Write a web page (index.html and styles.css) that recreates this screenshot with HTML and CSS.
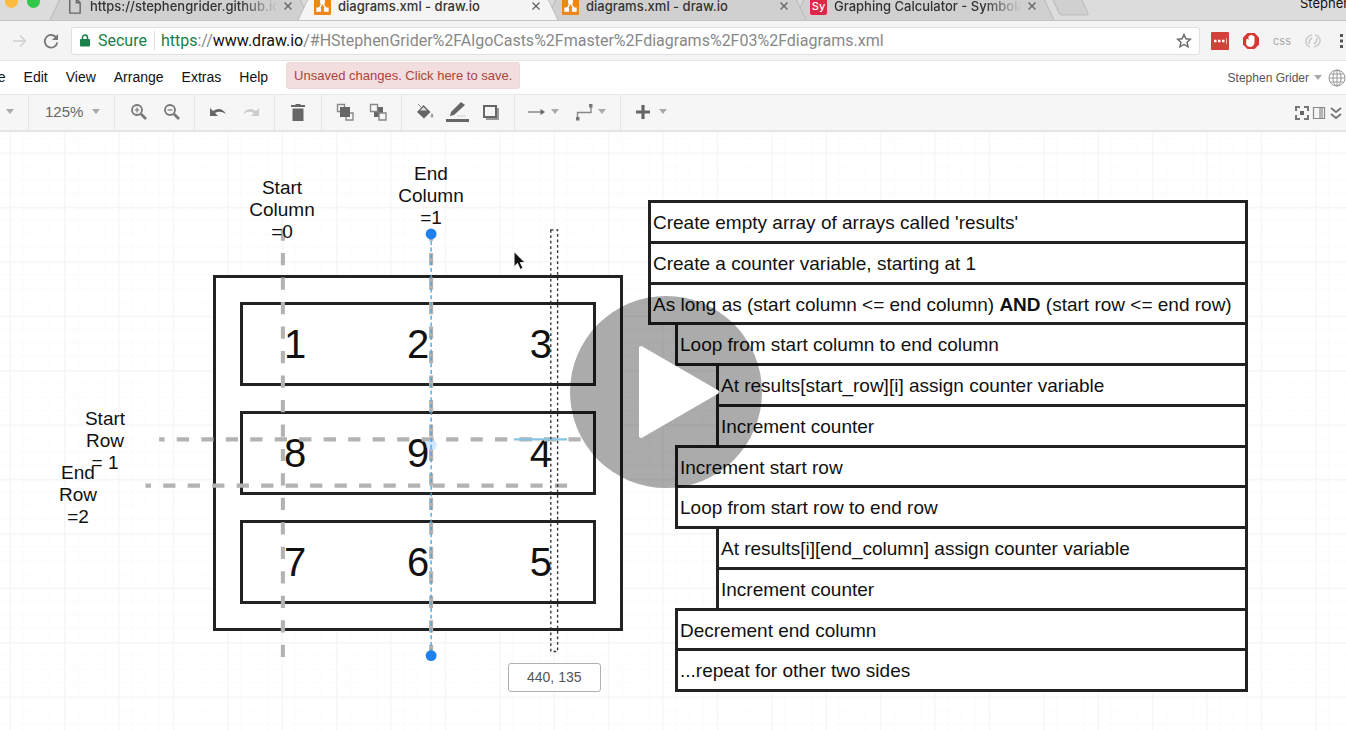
FILE: index.html
```html
<!DOCTYPE html>
<html lang="en">
<head>
<meta charset="utf-8">
<title>diagrams.xml - draw.io</title>
<link rel="stylesheet" href="styles.css">
</head>
<body>
<header class="browser">
  <div class="strip">
    <span class="light light-yellow"></span><span class="light light-green"></span>
    <nav class="tabs" aria-label="Browser tabs">
      <div class="tab tab-first"><svg class="favicon" viewBox="0 0 18 18"><path d="M4 1h7l4 4v11H4zM11 1v4h4" fill="none" stroke="#666" stroke-width="1.5"/></svg><span class="tab-title fade">https://stephengrider.github.io</span><button class="close" aria-label="Close tab"><svg viewBox="0 0 10 10"><path d="M1.500 1.500l7 7M8.500 1.500l-7 7"/></svg></button></div>
      <div class="tab tab-active"><svg class="favicon" viewBox="0 0 18 18"><rect width="18" height="18" rx="1" fill="#ef8618"/><path d="M9 5L5 12M9 5l4 7" stroke="#fff" stroke-width="1.500"/><path d="M6.500 2h5v4h-5zM2.500 10h5v4.500h-5zM10.500 10h5v4.500h-5z" fill="#fff"/></svg><span class="tab-title">diagrams.xml - draw.io</span><button class="close" aria-label="Close tab"><svg viewBox="0 0 10 10"><path d="M1.500 1.500l7 7M8.500 1.500l-7 7"/></svg></button></div>
      <div class="tab tab-third"><svg class="favicon" viewBox="0 0 18 18"><rect width="18" height="18" rx="1" fill="#ef8618"/><path d="M9 5L5 12M9 5l4 7" stroke="#fff" stroke-width="1.500"/><path d="M6.500 2h5v4h-5zM2.500 10h5v4.500h-5zM10.500 10h5v4.500h-5z" fill="#fff"/></svg><span class="tab-title">diagrams.xml - draw.io</span><button class="close" aria-label="Close tab"><svg viewBox="0 0 10 10"><path d="M1.500 1.500l7 7M8.500 1.500l-7 7"/></svg></button></div>
      <div class="tab"><span class="favicon sy">Sy</span><span class="tab-title fade">Graphing Calculator - Symbolab</span><button class="close" aria-label="Close tab"><svg viewBox="0 0 10 10"><path d="M1.500 1.500l7 7M8.500 1.500l-7 7"/></svg></button></div>
    </nav>
    <button class="new-tab" aria-label="New tab"><svg viewBox="0 0 38 16"><path d="M1 0l6 13q1 2 3 2h24q3 0 2-2L30 0" fill="#d0d0d0" stroke="#bababa"/></svg></button>
    <span class="profile">Stephen</span>
  </div>
  <div class="address">
    <button class="nav-btn" aria-label="Forward"><svg viewBox="0 0 16 16"><path d="M1 8h12M8 2.500L13.500 8 8 13.500" fill="none" stroke="#d0d0d0" stroke-width="1.500"/></svg></button>
    <button class="nav-btn" aria-label="Reload"><svg viewBox="0 0 16 16"><path d="M13.500 5A6.300 6.300 0 1 0 14.300 9.500" fill="none" stroke="#777" stroke-width="1.800"/><path d="M15 1v6H9z" fill="#777"/></svg></button>
    <div class="url">
      <svg class="lock" viewBox="0 0 10 13"><path d="M2.500 6V3.500a2.500 2.500 0 0 1 5 0V6" fill="none" stroke="#188048" stroke-width="1.500"/><rect y="5" width="10" height="7.500" rx="1" fill="#188048"/></svg>
      <span class="secure">Secure</span>
      <span class="url-text"><span class="scheme">https</span>://<span class="host">www.draw.io</span>/#HStephenGrider%2FAlgoCasts%2Fmaster%2Fdiagrams%2F03%2Fdiagrams.xml</span>
      <button class="star" aria-label="Bookmark"><svg viewBox="0 0 16 16"><path d="M8 1.500l1.900 4.300 4.600.4-3.500 3.100 1.100 4.600L8 11.500l-4.100 2.400L5 9.300 1.500 6.200l4.600-.4z" fill="none" stroke="#666" stroke-width="1.400"/></svg></button>
    </div>
    <div class="extensions">
      <button class="ext" aria-label="Passwords"><svg viewBox="0 0 18 18"><rect width="18" height="18" rx="1" fill="#d2413a"/><path d="M3 9h2.500M7 9h2.500M11 9h2.500" stroke="#fff" stroke-width="2.500"/><path d="M15.500 6v6" stroke="#f3b5b0"/></svg></button>
      <button class="ext" aria-label="Content blocker"><svg viewBox="0 0 18 18"><path d="M5.500 1h7L17 5.500v7L12.500 17h-7L1 12.500v-7z" fill="#d8362f"/><path d="M4.500 7q1-1 2 1V4.500q1-1.500 2-1 1-1.500 2 0 1.500 0 2 1.500v6q-1 4-4.500 4-3.500-.5-4-3.500z" fill="#fff"/></svg></button>
      <button class="ext css" aria-label="CSS">css</button>
      <button class="ext" aria-label="Sync"><svg viewBox="0 0 18 18"><path d="M8 3Q1 5 2 11q1 3 4 4M5 12q0-4 3-6M11 3q5 1 5 6 0 4-6 6M13 6q0 4-3 6" fill="none" stroke="#ccc" stroke-width="1.600"/></svg></button>
      <button class="dots" aria-label="Browser menu"><svg viewBox="0 0 4 16"><path d="M0 1h3v3H0zM0 6.500h3v3H0zM0 12h3v3H0z" fill="#555"/></svg></button>
    </div>
  </div>
</header>

<div class="menubar">
  <button class="menu menu-file">File</button><button class="menu">Edit</button><button class="menu">View</button><button class="menu">Arrange</button><button class="menu">Extras</button><button class="menu">Help</button>
  <button class="unsaved">Unsaved changes. Click here to save.</button>
  <button class="user">Stephen Grider<span class="caret"></span></button>
  <button class="globe" aria-label="Language"><svg viewBox="0 0 18 18" fill="none" stroke="#999"><circle cx="9" cy="9" r="8"/><ellipse cx="9" cy="9" rx="4" ry="8"/><path d="M9 1v16M1 9h16M2.500 5h13M2.500 13h13"/></svg></button>
</div>

<div class="toolbar">
  <div class="group group-view"><button class="drop" aria-label="View mode"><span class="caret"></span></button></div>
  <div class="group group-zoom"><button class="drop">125%<span class="caret"></span></button></div>
  <div class="group">
    <button class="tool" aria-label="Zoom in"><svg viewBox="0 0 18 18"><circle cx="8" cy="7" r="5" fill="none" stroke="#777" stroke-width="1.800"/><path d="M12 11l5 5" stroke="#777" stroke-width="2.600"/><path d="M5.500 7h5M8 4.500v5" stroke="#777" stroke-width="1.200"/></svg></button>
    <button class="tool" aria-label="Zoom out"><svg viewBox="0 0 18 18"><circle cx="8" cy="7" r="5" fill="none" stroke="#777" stroke-width="1.800"/><path d="M12 11l5 5" stroke="#777" stroke-width="2.600"/><path d="M5.500 7h5" stroke="#777" stroke-width="1.200"/></svg></button>
  </div>
  <div class="group">
    <button class="tool" aria-label="Undo"><svg viewBox="0 0 18 18"><path d="M1 5v8h8L6 10q5-3 11 1Q12 3 4 8z" fill="#666"/></svg></button>
    <button class="tool" aria-label="Redo"><svg viewBox="0 0 18 18"><path d="M17 5v8H9l3-3Q7 7 1 11 6 3 14 8z" fill="#ccc"/></svg></button>
  </div>
  <div class="group">
    <button class="tool" aria-label="Delete"><svg viewBox="0 0 18 18"><path d="M2 2h4l1-1h4l1 1h4v2H2zM3.500 5.500h11V18h-11z" fill="#666"/></svg></button>
  </div>
  <div class="group">
    <button class="tool" aria-label="To front"><svg viewBox="0 0 18 18"><path d="M1.500 1.500h7v7h-7zM10 10h7v7h-7z" fill="none" stroke="#888" stroke-width="1.400"/><path d="M4 4h10v10H4z" fill="#666"/></svg></button>
    <button class="tool" aria-label="To back"><svg viewBox="0 0 18 18"><path d="M5 4h9v10H5z" fill="#666"/><path d="M1.500 1.500h7v7h-7zM10 10h7v7h-7z" fill="#f6f6f6" stroke="#888" stroke-width="1.400"/></svg></button>
  </div>
  <div class="group">
    <button class="tool" aria-label="Fill colour"><svg viewBox="0 0 18 18"><path d="M2 1l3 3" stroke="#888"/><path d="M7.500 2l7 7-6.500 6.500L1 9z" fill="#666"/><path d="M7.500 4L4 7.500h7z" fill="#ddd"/><path d="M16 10q2.500 4 0 4.500-2.500-.5 0-4.500" fill="#999"/></svg></button>
    <button class="tool" aria-label="Line colour"><svg class="pencil" viewBox="0 0 24 22"><path d="M4 15l1-4L15 1l4 3L8 14z" fill="#666"/><path d="M11 15h9" stroke="#ccc"/><path d="M0 18h23v3H0z" fill="#666"/></svg></button>
    <button class="tool" aria-label="Shadow"><svg viewBox="0 0 18 18"><path d="M4 5h13v12H4z" fill="#999"/><path d="M2 3h12v11H2z" fill="#f6f6f6" stroke="#666" stroke-width="2"/></svg></button>
  </div>
  <div class="group group-lines">
    <button class="drop" aria-label="Connection"><svg viewBox="0 0 18 18"><path d="M0 9h14" stroke="#777" stroke-width="1.300"/><path d="M12.500 6L17 9l-4.500 3z" fill="#666"/></svg><span class="caret"></span></button>
    <button class="drop" aria-label="Waypoints"><svg viewBox="0 0 18 18"><path d="M2.500 16V9.500H16V3" fill="none" stroke="#888" stroke-width="1.400"/><path d="M1 14h3.500v3.500H1zM14 1h3.500v3.500H14z" fill="#777"/></svg><span class="caret"></span></button>
  </div>
  <div class="group group-insert"><button class="drop" aria-label="Insert"><svg viewBox="0 0 18 18"><path d="M2 9h14M9 2v14" stroke="#666" stroke-width="3.200"/></svg><span class="caret"></span></button></div>
  <div class="panel-tools">
    <button aria-label="Fullscreen"><svg viewBox="0 0 14 14"><path d="M1 5V1h4M9 1h4v4M13 9v4H9M5 13H1V9" fill="none" stroke="#777" stroke-width="2"/><path d="M5 5h4v4H5z" fill="#666"/></svg></button>
    <button aria-label="Format panel"><svg viewBox="0 0 14 14"><path d="M1.500 1.500h11v11h-11zM8 1.500v11M10 2v10" fill="none" stroke="#888" stroke-width="1.200"/></svg></button>
    <button aria-label="Collapse"><svg viewBox="0 0 14 14"><path d="M2 2l5 4 5-4M2 8l5 4 5-4" fill="none" stroke="#777" stroke-width="1.800"/></svg></button>
  </div>
</div>

<main class="canvas">
  <svg class="layer grid" viewBox="0 0 1000 440" aria-hidden="true">
    <defs><pattern id="grid" x="7" y="15" width="40" height="40" patternUnits="userSpaceOnUse">
      <path d="M10 0v40M20 0v40M30 0v40M0 10h40M0 20h40M0 30h40" stroke="#fcfcfc"/><path d="M0 0v40M0 0h40" stroke="#f5f5f5" stroke-width="2"/>
    </pattern></defs>
    <rect width="1000" height="440" fill="url(#grid)"/>
  </svg>

  <div class="matrix">
    <div class="matrix-row"><span>1</span><span>2</span><span>3</span></div>
    <div class="matrix-row"><span>8</span><span>9</span><span>4</span></div>
    <div class="matrix-row"><span>7</span><span>6</span><span>5</span></div>
  </div>

  <svg class="layer" viewBox="0 0 1000 440" fill="none" aria-hidden="true">
    <g stroke="#b3b3b3" stroke-width="3" stroke-dasharray="9 9">
      <path d="M208 71V386"/>
      <path d="M317 75V386" stroke-dashoffset="4"/>
      <path d="M117 226H427" stroke-dashoffset="5"/>
      <path d="M107 260H417" stroke-dashoffset="5"/>
    </g>
    <path d="M378 226H417" stroke="#86c4e2" stroke-width="1.500"/>
    <circle cx="317" cy="230" r="4" fill="#9fd0ff" fill-opacity=".5"/>
    <path d="M317 75V386" stroke="#4aa6e2" stroke-dasharray="3 2"/>
    <path d="M405 72h5v310h-5z" stroke="#333" stroke-dasharray="2 2"/>
    <circle cx="317" cy="75" r="4" fill="#1f80f0"/><circle cx="317" cy="385" r="4" fill="#1f80f0"/>
    <path d="M378 88v11l2.500-2.500 2 4.500 2-1-2-4h3.500z" fill="#111" stroke="#fff" stroke-width=".6"/>
  </svg>

  <div class="label start-column">Start<br>Column<br>=0</div>
  <div class="label end-column">End<br>Column<br>=1</div>
  <div class="label start-row">Start<br>Row<br>= 1</div>
  <div class="label end-row">End<br>Row<br>=2</div>
  <output class="coords">440, 135</output>

  <ol class="steps">
    <li>Create empty array of arrays called 'results'</li>
    <li>Create a counter variable, starting at 1</li>
    <li>As long as (start column &lt;= end column) <b>AND</b> (start row &lt;= end row)</li>
    <li class="in1">Loop from start column to end column</li>
    <li class="in2">At results[start_row][i] assign counter variable</li>
    <li class="in2">Increment counter</li>
    <li class="in1">Increment start row</li>
    <li class="in1">Loop from start row to end row</li>
    <li class="in2">At results[i][end_column] assign counter variable</li>
    <li class="in2">Increment counter</li>
    <li class="in1">Decrement end column</li>
    <li class="in1">...repeat for other two sides</li>
  </ol>

  <button class="play" aria-label="Play video"><svg viewBox="0 0 192 192"><path d="M71 52L147 96 71 140z" fill="#fff" stroke="#fff" stroke-width="4" stroke-linejoin="round"/></svg></button>
</main>
</body>
</html>
```
FILE: styles.css
```css
* { box-sizing: border-box; }
body {
  margin: 0;
  height: 100vh;
  display: flex;
  flex-direction: column;
  overflow: hidden;
  background: #fff;
  color: #111;
  font-family: "Liberation Sans", Arial, sans-serif;
}
button {
  margin: 0;
  padding: 0;
  border: 0;
  background: none;
  color: inherit;
  font: inherit;
  white-space: nowrap;
}
svg { display: block; flex: none; }

/* Browser chrome */
.browser { font-family: Inter, Roboto, sans-serif; }
.strip {
  position: relative;
  display: flex;
  height: 21px;
  overflow: hidden;
  background: #dcdcdc;
  border-bottom: 1px solid #c4c4c4;
}
.light {
  flex: none;
  width: 13px;
  height: 13px;
  margin: -5px 0 0 5px;
  border-radius: 50%;
}
.light-yellow { background: #fdbc40; }
.light-green { margin-left: 9px; background: #34c84a; }
.tabs { display: flex; flex: none; margin-left: 16px; height: 21px; }
.tab {
  position: relative;
  z-index: 0;
  display: flex;
  align-items: center;
  width: 248px;
  height: 12px;
  padding: 0 11px 0 10px;
  font-size: 13px;
  font-weight: 500;
  color: #333;
}
.tab::before, .tab::after {
  content: "";
  position: absolute;
  z-index: -1;
  top: 0;
  left: -7px;
  right: -7px;
  height: 21px;
  background: #b8b8b8;
  clip-path: polygon(10px 0, calc(100% - 10px) 0, 100% 100%, 0 100%);
}
.tab::after { left: -6px; right: -6px; background: #d0d0d0; }
.tab-first { z-index: 1; }
.tab-third { z-index: 1; }
.tab-active { z-index: 2; }
.tab-active::after { background: #f4f4f4; }
.favicon { flex: none; width: 17px; height: 17px; }
.sy {
  border-radius: 2px;
  background: #dc2848;
  color: #fff;
  font-size: 11px;
  line-height: 17px;
  text-align: center;
}
.tab-title { flex: 1; margin-left: 7px; overflow: hidden; white-space: nowrap; line-height: 18px; }
.fade { -webkit-mask-image: linear-gradient(to right, #000 80%, transparent); mask-image: linear-gradient(to right, #000 80%, transparent); }
.close { margin-left: 5px; }
.close svg { width: 10px; height: 10px; stroke: #666; stroke-width: 1.4; }
.new-tab { margin-left: 4px; align-self: flex-start; }
.new-tab svg { width: 38px; height: 16px; }
.profile {
  position: absolute;
  top: -6px;
  left: calc(100% - 46px);
  font-size: 13px;
  line-height: 18px;
  white-space: nowrap;
}
.address {
  display: flex;
  align-items: center;
  height: 40px;
  padding: 0 2px 0 12px;
  background: #f4f4f4;
  border-bottom: 1px solid #e4e4e4;
}
.nav-btn { margin-right: 15px; }
.nav-btn svg { width: 16px; height: 16px; }
.nav-btn + .nav-btn { margin-right: 12px; }
.url {
  display: flex;
  align-items: center;
  flex: 1;
  min-width: 0;
  height: 28px;
  padding: 0 7px 0 8px;
  background: #fff;
  border: 1px solid #e0e0e0;
  border-radius: 3px;
  font-family: Roboto, sans-serif;
  font-size: 16px;
}
.lock { width: 10px; height: 13px; }
.secure { margin: 0 6px 0 8px; padding-right: 7px; border-right: 1px solid #ddd; color: #188048; }
.url-text { flex: 1; color: #888; white-space: nowrap; }
.scheme { color: #188048; }
.host { color: #111; }
.star svg { width: 16px; height: 16px; }
.extensions { display: flex; align-items: center; flex: none; gap: 13px; padding-left: 11px; }
.ext { width: 18px; }
.ext svg { width: 18px; height: 18px; }
.css { font-size: 11px; color: #aaa; }
.dots { margin-left: 5px; }
.dots svg { width: 4px; height: 16px; }

/* Application menu */
.menubar {
  display: flex;
  align-items: center;
  flex: none;
  height: 33px;
  font-size: 14px;
  overflow: hidden;
}
.menu { margin-right: 18px; padding-bottom: 2px; }
.menu-file { margin-left: -17px; }
.unsaved {
  align-self: flex-start;
  height: 27px;
  margin-top: 1px;
  padding: 0 7px;
  border: 1px solid #f0d6d6;
  border-radius: 3px;
  background: #f2dede;
  color: #a94442;
  font-size: 13px;
}
.user { margin-left: auto; display: flex; align-items: center; gap: 5px; font-size: 12px; color: #555; }
.globe { margin: 0 0 0 6px; }
.globe svg { width: 18px; height: 18px; }
.caret {
  border: 4px solid transparent;
  border-top: 5px solid #aaa;
  border-bottom: 0;
}

/* Toolbar */
.toolbar {
  display: flex;
  flex: none;
  height: 38px;
  background: #f6f6f6;
  border-top: 1px solid #e8e8e8;
  border-bottom: 2px solid #e4e4e4;
  color: #666;
  font-size: 15px;
}
.group {
  display: flex;
  align-items: center;
  flex: none;
  padding: 0 7px 2px 6px;
  border-right: 1px solid #e6e6e6;
}
.tool { display: grid; place-items: center; width: 33px; }
.tool svg, .drop svg { width: 18px; height: 18px; }
.tool .pencil { width: 24px; height: 22px; }
.drop { display: flex; align-items: center; gap: 5px; }
.group-view { padding-right: 14px; }
.group-zoom { padding: 0 14px 2px 16px; }
.group-zoom .drop { gap: 9px; }
.group-lines { gap: 16px; padding: 0 14px 2px 13px; }
.group-insert { padding-left: 13px; border-right: 0; }
.group-insert .drop { gap: 7px; }
.panel-tools { display: flex; align-items: center; gap: 3px; margin: 0 3px 0 auto; }
.panel-tools svg { width: 14px; height: 14px; }

/* Diagram canvas */
.canvas { position: relative; flex: 1; overflow: hidden; }
.layer { position: absolute; top: 0; left: 0; width: 1360px; }
.matrix {
  position: absolute;
  top: 143px;
  left: 213px;
  display: flex;
  flex-direction: column;
  gap: 25px;
  width: 410px;
  padding: 24px;
  border: 3px solid #222;
  background: #fff;
}
.matrix-row {
  display: flex;
  align-items: center;
  justify-content: space-between;
  height: 84px;
  padding: 0 41px;
  border: 3px solid #222;
  font-size: 40px;
}
.label {
  position: absolute;
  width: 80px;
  font-size: 19px;
  line-height: 22px;
  text-align: center;
}
.start-column { left: 242px; top: 45px; }
.end-column { left: 391px; top: 31px; }
.start-row { left: 65px; top: 276px; }
.end-row { left: 38px; top: 330px; }
.coords {
  position: absolute;
  left: 508px;
  top: 531px;
  padding: 5px 18px;
  border: 1px solid #b0b0b0;
  border-radius: 3px;
  background: #fff;
  color: #555;
  font-size: 14px;
  line-height: 17px;
}
.steps {
  position: absolute;
  top: 68px;
  left: 648px;
  display: flex;
  flex-direction: column;
  width: 600px;
  height: 492px;
  margin: 0;
  padding: 0;
  list-style: none;
  font-size: 19px;
}
.steps li {
  display: block;
  flex: 1;
  padding: 3px 0 0 2px;
  border: 3px solid #222;
  background: #fff;
  line-height: 34px;
  white-space: nowrap;
}
.steps li + li { margin-top: -3px; }
.steps .in1 { margin-left: 27px; }
.steps .in2 { margin-left: 68px; }
.play {
  position: absolute;
  top: 164px;
  left: 570px;
  width: 192px;
  height: 192px;
  border-radius: 50%;
  background: rgba(0, 0, 0, .33);
}
```
